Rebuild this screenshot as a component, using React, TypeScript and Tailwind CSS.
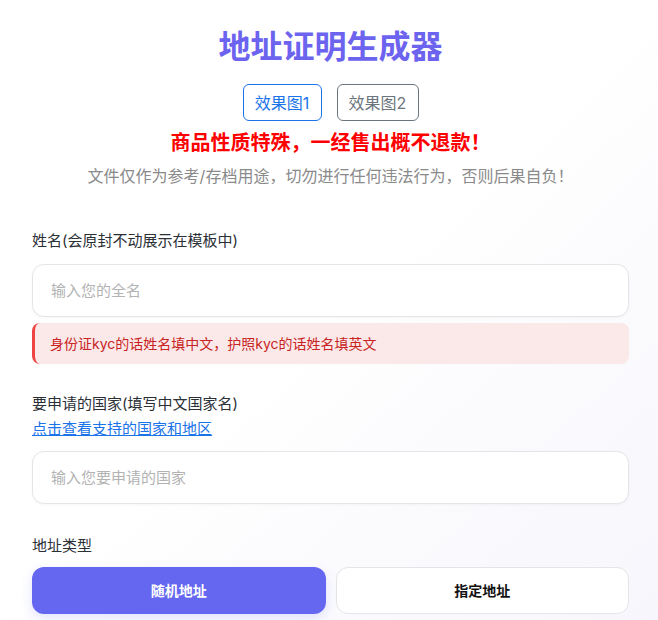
import { useState } from "react";

const FONT = "font-['Inter','Noto_Sans_CJK_SC',sans-serif]";

// ─── Field pieces ────────────────────────────────────────────────────────────

function FieldLabel({ children, className = "" }: { children: React.ReactNode; className?: string }) {
  return <div className={`text-[15px] leading-[22px] text-[#2b2f36] ${className}`}>{children}</div>;
}

function TextInput({ placeholder, className = "" }: { placeholder: string; className?: string }) {
  return (
    <input
      type="text"
      placeholder={placeholder}
      className={`block w-full h-[53px] rounded-[12px] border border-[#e3e5e8] bg-white px-[18px] text-[15px] text-[#333] placeholder:text-[#b3b3b3] shadow-[0_1px_3px_rgba(0,0,0,0.04)] outline-none ${className}`}
    />
  );
}

// ─── App ─────────────────────────────────────────────────────────────────────

export default function App() {
  const [preview, setPreview] = useState(1);
  const [addrType, setAddrType] = useState<"random" | "fixed">("random");

  return (
    <div className={`min-h-[620px] w-full bg-gradient-to-br from-white via-white to-[#f6f6fc] ${FONT}`}>
      <div className="ml-8 mr-[29px] pt-[27px]">
        {/* Header */}
        <h1 className="text-center text-[32px] leading-[40px] font-bold text-[#6c63ef]">地址证明生成器</h1>

        <div className="mt-[17px] flex justify-center gap-[15px]">
          <button
            type="button"
            onClick={() => setPreview(1)}
            className={`h-[37px] w-[79px] rounded-[6px] border text-[16px] ${
              preview === 1 ? "border-[#1a73e8] text-[#1a73e8]" : "border-[#6c757d] text-[#6c757d]"
            }`}
          >
            效果图1
          </button>
          <button
            type="button"
            onClick={() => setPreview(2)}
            className={`h-[37px] w-[82px] rounded-[6px] border text-[16px] ${
              preview === 2 ? "border-[#1a73e8] text-[#1a73e8]" : "border-[#6c757d] text-[#6c757d]"
            }`}
          >
            效果图2
          </button>
        </div>

        <p className="mt-2 text-center text-[20px] leading-[28px] font-bold text-[#ff0000]">
          商品性质特殊，一经售出概不退款！
        </p>
        <p className="mt-[7px] text-center text-[16px] leading-[24px] text-[#8a8a8a]">
          文件仅作为参考/存档用途，切勿进行任何违法行为，否则后果自负！
        </p>

        {/* Name */}
        <FieldLabel className="mt-[42px]">姓名(会原封不动展示在模板中)</FieldLabel>
        <TextInput placeholder="输入您的全名" className="mt-3" />
        <div className="mt-[6px] h-[41px] flex items-center rounded-[8px] border-l-[3px] border-[#ef4444] bg-[#fbe9e9] pl-[15px] text-[14px] text-[#c82424]">
          身份证kyc的话姓名填中文，护照kyc的话姓名填英文
        </div>

        {/* Country */}
        <FieldLabel className="mt-[29px]">要申请的国家(填写中文国家名)</FieldLabel>
        <a href="#" className="mt-[3px] block w-fit text-[15px] leading-[22px] text-[#1a73e8] underline">
          点击查看支持的国家和地区
        </a>
        <TextInput placeholder="输入您要申请的国家" className="mt-[11px]" />

        {/* Address type */}
        <FieldLabel className="mt-[31px]">地址类型</FieldLabel>
        <div className="mt-[10px] grid grid-cols-2 gap-[10px]">
          <button
            type="button"
            onClick={() => setAddrType("random")}
            className={`h-[47px] rounded-[12px] text-[14px] font-bold ${
              addrType === "random"
                ? "bg-[#6567f1] text-white shadow-[0_4px_12px_rgba(101,103,241,0.18)]"
                : "border border-[#e3e5e8] bg-white text-[#111]"
            }`}
          >
            随机地址
          </button>
          <button
            type="button"
            onClick={() => setAddrType("fixed")}
            className={`h-[47px] rounded-[12px] text-[14px] font-bold ${
              addrType === "fixed"
                ? "bg-[#6567f1] text-white shadow-[0_4px_12px_rgba(101,103,241,0.18)]"
                : "border border-[#e3e5e8] bg-white text-[#111]"
            }`}
          >
            指定地址
          </button>
        </div>
      </div>
    </div>
  );
}
